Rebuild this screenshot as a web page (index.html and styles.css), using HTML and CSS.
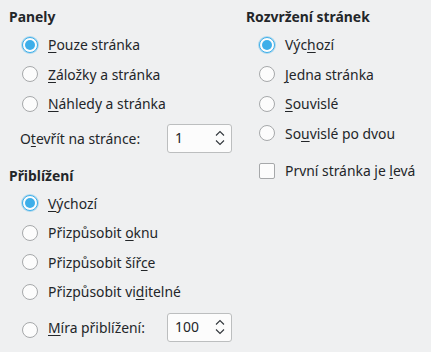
FILE: index.html
```html
<!DOCTYPE html>
<html>
<head>
<meta charset="utf-8">
<link rel="stylesheet" href="styles.css">
</head>
<body>
<div class="page">
  <div class="col col-left">
    <div class="heading">Panely</div>
    <div class="group">
      <div class="row"><span class="radio checked"></span><span class="lbl"><u>P</u>ouze stránka</span></div>
      <div class="row"><span class="radio"></span><span class="lbl"><u>Z</u>áložky a stránka</span></div>
      <div class="row"><span class="radio"></span><span class="lbl"><u>N</u>áhledy a stránka</span></div>
    </div>
    <div class="spinrow">
      <span class="spinlbl">O<u>t</u>evřít na stránce:</span>
      <span class="spin"><span class="val">1</span>
        <svg class="arrows" width="10" height="16" viewBox="0 0 10 16"><path d="M1 5.5 L5 1.5 L9 5.5 M1 10.5 L5 14.5 L9 10.5" fill="none" stroke="#31363b" stroke-width="1.1"/></svg>
      </span>
    </div>
    <div class="heading heading2">Přiblížení</div>
    <div class="group">
      <div class="row"><span class="radio checked"></span><span class="lbl"><u>V</u>ýchozí</span></div>
      <div class="row"><span class="radio"></span><span class="lbl">Přizpůsobit <u>o</u>knu</span></div>
      <div class="row"><span class="radio"></span><span class="lbl">Přizpůsobit šíř<u>c</u>e</span></div>
      <div class="row"><span class="radio"></span><span class="lbl">Přizpůsobit vi<u>d</u>itelné</span></div>
      <div class="row row-spin"><span class="radio up"></span><span class="lbl lbl-fixed"><u>M</u>íra přiblížení:</span>
        <span class="spin"><span class="val">100</span>
          <svg class="arrows" width="10" height="16" viewBox="0 0 10 16"><path d="M1 5.5 L5 1.5 L9 5.5 M1 10.5 L5 14.5 L9 10.5" fill="none" stroke="#31363b" stroke-width="1.1"/></svg>
        </span>
      </div>
    </div>
  </div>
  <div class="col col-right">
    <div class="heading">Rozvržení stránek</div>
    <div class="group">
      <div class="row"><span class="radio checked"></span><span class="lbl">Výc<u>h</u>ozí</span></div>
      <div class="row"><span class="radio"></span><span class="lbl"><u>J</u>edna stránka</span></div>
      <div class="row"><span class="radio"></span><span class="lbl"><u>S</u>ouvislé</span></div>
      <div class="row"><span class="radio"></span><span class="lbl">So<u>u</u>vislé po dvou</span></div>
      <div class="row row-check"><span class="check"></span><span class="lbl">První stránka je <u>l</u>evá</span></div>
    </div>
  </div>
</div>
</body>
</html>
```
FILE: styles.css
```css
html, body {
  margin: 0;
  padding: 0;
  background: #eff0f1;
}
body {
  font-family: "Noto Sans", "DejaVu Sans", sans-serif;
  font-size: 13.9px;
  color: #232629;
  width: 431px;
  height: 352px;
  overflow: hidden;
}
.page {
  display: grid;
  grid-template-columns: 237px 1fr;
  padding-left: 9px;
}
.col {
  display: flex;
  flex-direction: column;
}
.heading {
  font-weight: bold;
  line-height: 18px;
  height: 18px;
  margin-top: 8px;
}
.heading2 {
  margin-top: 14px;
}
.group {
  display: flex;
  flex-direction: column;
  margin-top: 4px;
}
.row {
  display: flex;
  align-items: center;
  height: 29.5px;
  padding-left: 13px;
}
.lbl {
  margin-left: 10px;
  white-space: nowrap;
}
u {
  text-decoration: underline;
  text-underline-offset: 2px;
  text-decoration-thickness: 1px;
}
.radio {
  width: 16px;
  height: 16px;
  box-sizing: border-box;
  border: 1px solid #a6a8aa;
  border-radius: 50%;
  background: #fcfcfc;
  flex: none;
  position: relative;
}
.radio.checked {
  border-color: #3daee9;
  box-shadow: 0 0 0 1px rgba(61,174,233,0.35);
}
.radio.checked::after {
  content: "";
  position: absolute;
  left: 2px;
  top: 2px;
  width: 10px;
  height: 10px;
  border-radius: 50%;
  background: #3daee9;
}
.radio.up {
  align-self: flex-start;
  margin-top: 9px;
}
.check {
  width: 16px;
  height: 16px;
  box-sizing: border-box;
  border: 1px solid #a6a8aa;
  border-radius: 2px;
  background: #fcfcfc;
  flex: none;
}
.row-check {
  margin-top: 8px;
}
.spinrow {
  display: flex;
  align-items: center;
  margin-top: 5px;
  padding-left: 11px;
  height: 29px;
}
.spinlbl {
  width: 147px;
  white-space: nowrap;
}
.spin {
  width: 65px;
  height: 29px;
  box-sizing: border-box;
  border: 1px solid #bcbebf;
  border-radius: 3px;
  background: #fcfcfc;
  display: flex;
  align-items: center;
  justify-content: space-between;
  padding: 0 6px 0 7px;
  flex: none;
}
.val {
  line-height: 18px;
}
.arrows {
  display: block;
}
.row-spin {
  margin-top: 6px;
  height: 29px;
}
.lbl-fixed {
  width: 119px;
}
```
